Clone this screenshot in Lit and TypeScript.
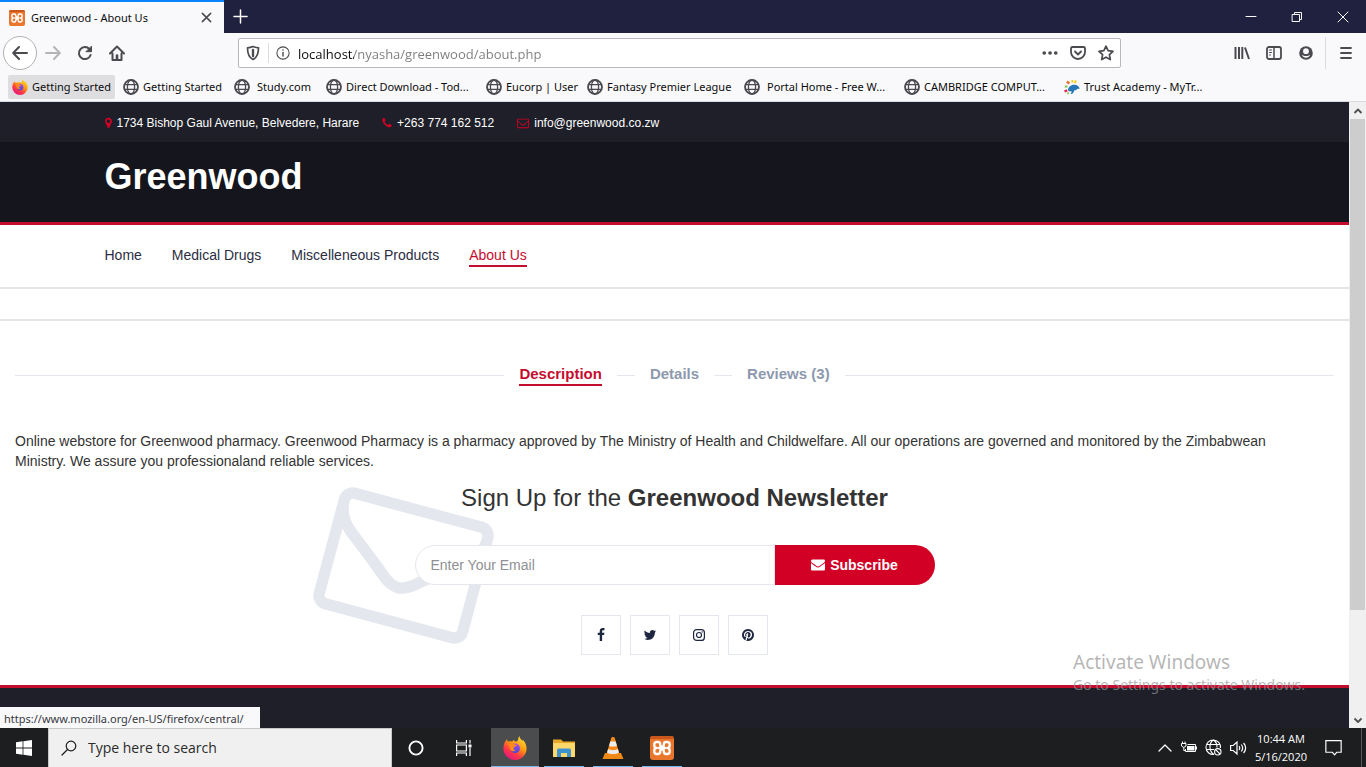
import { LitElement, html, css, svg, nothing } from "lit";
import { customElement, property } from "lit/decorators.js";
import { styleMap } from "lit/directives/style-map.js";

/* ---------- Glyphs on a 1792 grid ---------- */
const glyphs: Record<string, string> = {
  marker:
    "M1152 640q0-106-75-181t-181-75-181 75-75 181 75 181 181 75 181-75 75-181zm256 0q0 109-33 179l-364 774q-16 33-47.5 52t-67.5 19-67.5-19-46.5-52l-365-774q-33-70-33-179 0-212 150-362t362-150 362 150 150 362z",
  phone:
    "M1600 1240q0 27-10 70.5t-21 68.5q-21 50-122 106-94 51-186 51-27 0-53-3.5t-57.5-12.5-47-14.5-55.5-20.5-49-18q-98-35-175-83-127-79-264-216t-216-264q-48-77-83-175-3-9-18-49t-20.5-55.5-14.5-47-12.5-57.5-3.5-53q0-92 51-186 56-101 106-122 25-11 68.5-21t70.5-10q14 0 21 3 18 6 53 76 11 19 30 54t35 63.5 31 53.5q3 4 17.5 25t21.5 35.5 7 28.5q0 20-28.5 50t-62 55-62 53-28.5 46q0 9 5 22.5t8.5 20.5 14 24 11.5 19q76 137 174 235t235 174q2 1 19 11.5t24 14 20.5 8.5 22.5 5q18 0 46-28.5t53-62 55-62 50-28.5q14 0 28.5 7t35.5 21.5 25 17.5q25 15 53.5 31t63.5 35 54 30q70 35 76 53 3 7 3 21z",
  envelopeOpen:
    "M1664 1504v-768q-32 36-69 66-268 206-426 338-51 43-83 67t-86.5 48.5-102.5 24.5h-2q-48 0-102.5-24.5t-86.5-48.5-83-67q-158-132-426-338-37-30-69-66v768q0 13 9.5 22.5t22.5 9.5h1472q13 0 22.5-9.5t9.5-22.5zm0-1051v-24.5l-.5-13-3-12.5-5.5-9-9-7.5-14-2.5h-1472q-13 0-22.5 9.5t-9.5 22.5q0 168 147 284 193 152 401 317 6 5 35 29.5t46 37.5 44.5 31.5 50.5 27.5 43 9h2q20 0 43-9t50.5-27.5 44.5-31.5 46-37.5 35-29.5q208-165 401-317 54-43 100.5-115.5t46.5-131.5zm128-37v1088q0 66-47 113t-113 47h-1472q-66 0-113-47t-47-113v-1088q0-66 47-113t113-47h1472q66 0 113 47t47 113z",
  envelope:
    "M1792 710v794q0 66-47 113t-113 47h-1472q-66 0-113-47t-47-113v-794q44 49 101 87 362 246 497 345 57 42 92.5 65.5t94.5 48 110 24.5h2q51 0 110-24.5t94.5-48 92.5-65.5q170-123 498-345 57-39 100-87zm0-294q0 79-49 151t-122 123q-376 261-468 325-10 7-42.5 31t-54 38.5-52 32.5-57.5 27-50 9h-2q-23 0-50-9t-57.5-27-52-32.5-54-38.5-42.5-31q-91-64-262-182.5t-205-142.5q-62-42-117-115.5t-55-136.5q0-78 41.5-130t118.5-52h1472q65 0 112.5 47t47.5 113z",
  facebook:
    "M1343 12v264h-157q-86 0-116 36t-30 108v189h293l-39 296h-254v759h-306v-759h-255v-296h255v-218q0-186 104-288.5t277-102.5q147 0 228 12z",
  twitter:
    "M1684 408q-67 98-162 167 1 14 1 42 0 130-38 259.5t-115.5 248.5-184.5 210.5-258 146-323 54.5q-271 0-496-145 35 4 78 4 225 0 401-138-105-2-188-64.5t-114-159.5q33 5 61 5 43 0 85-11-112-23-185.5-111.5t-73.5-205.5v-4q68 38 146 41-66-44-105-115t-39-154q0-88 44-163 121 149 294.5 238.5t371.5 99.5q-8-38-8-74 0-134 94.5-228.5t228.5-94.5q140 0 236 102 109-21 205-78-37 115-142 178 93-10 186-50z",
  pinterest:
    "M1664 896q0 209-103 385.5t-279.5 279.5-385.5 103q-111 0-218-32 59-93 78-164 9-34 54-211 20 39 73 67.5t114 28.5q121 0 216-68.5t147-188.5 52-270q0-114-59.5-214t-172.5-163-255-63q-105 0-196 29t-154.5 77-109 110.5-67 129.5-21.5 134q0 104 40 183t117 111q30 12 38-20 2-7 8-31t8-30q6-23-11-43-51-61-51-151 0-151 104.5-259.5t273.5-108.5q151 0 235.5 82t84.5 213q0 170-68.5 289t-175.5 119q-61 0-98-43.5t-23-104.5q8-35 26.5-93.5t30-103 11.5-75.5q0-50-27-83t-77-33q-62 0-105 57t-43 142q0 73 25 122l-99 418q-17 70-13 177-206-91-333-281t-127-423q0-209 103-385.5t279.5-279.5 385.5-103 385.5 103 279.5 279.5 103 385.5z",
};

const glyph = (name: string, size: number, box = "0 0 1792 1792", width = size) =>
  html`<svg width=${width} height=${size} viewBox=${box} fill="currentColor" aria-hidden="true">
    <path d=${glyphs[name]}></path>
  </svg>`;

/* Line icons on a 16 grid */
const line = (body: unknown, size = 16, stroke = 2) =>
  html`<svg width=${size} height=${size} viewBox="0 0 16 16" fill="none" stroke="currentColor"
    stroke-width=${stroke} stroke-linecap="round" stroke-linejoin="round" aria-hidden="true">${body}</svg>`;

const instagram = html`<svg width="14" height="14" viewBox="0 0 14 14" fill="none" stroke="currentColor" aria-hidden="true">
  <rect x="1.6" y="1.6" width="10.8" height="10.8" rx="3" stroke-width="1.2"></rect>
  <circle cx="7" cy="7" r="2.5" stroke-width="1.2"></circle>
  <circle cx="10.2" cy="3.9" r=".7" fill="currentColor" stroke="none"></circle>
</svg>`;

const globe = line(svg`<circle cx="8" cy="8" r="7"/><ellipse cx="8" cy="8" rx="3.6" ry="7" stroke-width="1.3"/><path d="M2 5.6h12M2 10.4h12" stroke-width="1.3"/>`, 16, 1.8);

const xampp = (size: number) => html`<svg width=${size} height=${size} viewBox="0 0 24 24" aria-hidden="true">
  <rect width="24" height="24" rx="3" fill="#e8762d"></rect>
  <path d="M0 3a3 3 0 0 1 3-3h18a3 3 0 0 1 3 3H0z" fill="#c9561b"></path>
  <path d="M10.200 9V8.300A2.300 2.300 0 0 0 7.900 6H6.800A2.500 2.500 0 0 0 4.300 8.500v1C4.300 11 5.200 12 6.800 12 5.200 12 4.300 13 4.300 14.500v1A2.500 2.500 0 0 0 6.800 18h1.100A2.300 2.300 0 0 0 10.200 15.700V15M13.800 9V8.300A2.300 2.300 0 0 1 16.100 6h1.100a2.500 2.500 0 0 1 2.500 2.500v1c0 1.500-.9 2.500-2.500 2.500 1.600 0 2.500 1 2.500 2.500v1a2.500 2.500 0 0 1-2.500 2.500h-1.100a2.300 2.300 0 0 1-2.300-2.300V15M10.200 9c0 1.500.8 1.600 1.800 1.600s1.800-.1 1.800-1.600M10.200 15c0-1.500.8-1.600 1.800-1.600s1.800.1 1.800 1.600M9 12h6"
    fill="none" stroke="#fff" stroke-width="2.300" stroke-linejoin="round" stroke-linecap="round"></path>
</svg>`;

const firefox = (size: number) => html`<svg width=${size} height=${size} viewBox="0 0 24 24" aria-hidden="true">
  <defs>
    <linearGradient id="flame" x1=".85" y1=".05" x2=".25" y2="1">
      <stop offset="0" stop-color="#ffe03a"></stop><stop offset=".4" stop-color="#ff980e"></stop>
      <stop offset=".7" stop-color="#ff3647"></stop><stop offset="1" stop-color="#e31587"></stop>
    </linearGradient>
    <linearGradient id="orb" x1=".6" y1="0" x2=".4" y2="1">
      <stop offset="0" stop-color="#a24bf0"></stop><stop offset="1" stop-color="#4a48cf"></stop>
    </linearGradient>
  </defs>
  <path d="M3.800 3.200c.3 1.200.8 1.800 1.700 2.300 1.200-.3 2.400-.2 3.400.1C9.800 4.500 11.200 3.800 12 3.700c-.6.500-1 1-1 1.600 1.500.2 3 .2 3.700-.5.8-1.600.4-3.300 1.600-4.800.4 2.200 1.700 3.200 3.200 4.900.2-.5.200-1 .1-1.500 2.600 2.600 4 5.800 4 9.200A11.600 11.600 0 0 1 12 24 11.600 11.600 0 0 1 .4 12.400c0-3.600 1.200-6.800 3.400-9.200z" fill="url(#flame)"></path>
  <circle cx="12.200" cy="12.400" r="4.800" fill="url(#orb)"></circle>
  <path d="M5 8.500c2-1.600 4.700-1.600 6.500.1 1.200 0 2 .5 2.500 1-1.200.8-2.800.8-3.300 2.300-.4 1.300.8 2.700 2.300 2.700-2 1.600-5.500.5-6.300-2.200-.4-1.600-.1-2.200 0-2.700z" fill="#ff8a1c"></path>
</svg>`;

const mascot = html`<svg width="16" height="16" viewBox="0 0 16 16" aria-hidden="true">
  <path d="M4 11.500C4 8 7 5.500 10.500 5.700c2.700 0 4.700 1.700 5.200 4.300-1.500-.6-2.500-.5-3 .6-.4 1-1.500.8-2.300.6-.8 2-1.200 3.800-4 3.800 1-.8 1.400-1.700 1-2.700-1.200.2-2.400 0-3.400-.8z" fill="#2577b5"></path>
  <path d="M3 2.500l2.200 2.200" stroke="#f26b2a" stroke-width="2.600"></path>
  <path d="M8.200 1l.3 2.500M12 1.500l-1.300 2.500" stroke="#f8cf1f" stroke-width="2"></path>
  <path d="M.8 7.500l2.700.2" stroke="#7fc241" stroke-width="1.800"></path>
  <path d="M.5 12.500l2.700-1.200" stroke="#e5274f" stroke-width="2.400"></path>
  <path d="M3.600 15l1-1.600" stroke="#7fc241" stroke-width="1.600"></path>
</svg>`;

interface Bookmark { label: string; width: number; icon: unknown; wide?: boolean; active?: boolean }

const bookmarks: Bookmark[] = [
  { label: "Getting Started", width: 79, icon: firefox(16), active: true },
  { label: "Getting Started", width: 79, icon: globe },
  { label: "Study.com", width: 57, icon: globe, wide: true },
  { label: "Direct Download - Tod...", width: 128, icon: globe },
  { label: "Eucorp | User", width: 69, icon: globe },
  { label: "Fantasy Premier League", width: 125, icon: globe },
  { label: "Portal Home - Free W...", width: 125, icon: globe, wide: true },
  { label: "CAMBRIDGE COMPUT...", width: 128, icon: globe },
  { label: "Trust Academy - MyTr...", width: 125, icon: mascot },
];

@customElement("browser-chrome")
class BrowserChrome extends LitElement {
  static styles = css`
    :host { display: block; font: 11px/16px "Noto Sans", "Open Sans", sans-serif; color: #0c0c0d; }
    button { border: 0; padding: 0; background: none; color: inherit; font: inherit; display: grid; place-items: center; }
    svg { display: block; flex: none; }
    .titlebar { display: flex; height: 33px; background: #20213f; color: #f9f9fa; }
    .tab { display: flex; align-items: center; box-sizing: border-box; width: 224px; padding: 0 12px 0 9px; gap: 6px;
      background: #f9f9fb; border-top: 2px solid #0a84ff; color: #0c0c0d; }
    .tab-title { flex: 1; }
    .tab-close { width: 12px; height: 16px; color: #4a4a4f; }
    .new-tab { width: 33px; }
    .window { display: flex; margin-left: auto; }
    .window button { width: 46px; }
    .toolbar { display: flex; align-items: center; height: 40px; background: #f9f9fb; color: #4a4a4f; padding-right: 3px; }
    .nav { display: flex; align-items: center; padding-left: 3px; width: 235px; box-sizing: border-box; }
    .nav button { width: 32px; height: 32px; }
    .nav .back { width: 34px; height: 34px; box-sizing: border-box; border: 1px solid #b1b1b3; border-radius: 50%; background: #fff; }
    .nav .forward { color: #b4b4b8; }
    .address { display: flex; align-items: center; box-sizing: border-box; flex: 1; height: 30px; margin-left: 3px; gap: 8px; padding: 0 6px;
      border: 1px solid #b8b8bc; border-radius: 2px; background: #fff; }
    .site { display: flex; align-items: center; gap: 7px; }
    .site-divider { width: 1px; height: 20px; background: #dcdce0; }
    .url { flex: 1; min-width: 0; border: 0; padding: 2px 0 0; outline: 0; font: 13px/20px "Open Sans", "Noto Sans", sans-serif;
      background: linear-gradient(90deg, #0c0c0d 56px, #7c7c80 56px); background-clip: text; -webkit-background-clip: text;
      color: #7c7c80; -webkit-text-fill-color: transparent; }
    .page-actions { display: flex; align-items: center; gap: 12px; }
    .tools { display: flex; align-items: center; width: 242px; justify-content: flex-end; }
    .tools button { width: 32px; height: 32px; }
    .tools .menu { width: 38px; border-left: 1px solid #dcdce0; margin-left: 3px; padding-left: 3px; }
    .bookmarks { display: flex; align-items: center; height: 28px; padding: 0 8px; gap: 4px; background: #f9f9fb; border-bottom: 1px solid #d9dbe3; }
    .bookmark { display: flex; align-items: center; height: 24px; padding: 0 4px; gap: 4px; color: #0c0c0d; text-decoration: none; white-space: nowrap; border-radius: 2px; }
    .bookmark svg { color: #4a4a4f; }
    .bookmark.wide { gap: 7px; }
    .bookmark.active { background: #dedee1; }
  `;

  render() {
    return html`
      <div class="titlebar">
        <div class="tab">
          ${xampp(16)}<span class="tab-title">Greenwood - About Us</span>
          <button class="tab-close" aria-label="Close tab">${line(svg`<path d="M2 2l12 12M14 2L2 14"/>`, 11, 2.2)}</button>
        </div>
        <button class="new-tab" aria-label="New tab">${line(svg`<path d="M8 1v14M1 8h14"/>`, 15, 1.6)}</button>
        <div class="window">
          <button aria-label="Minimize">${line(svg`<path d="M3 7.500h10"/>`, 16, 1)}</button>
          <button aria-label="Restore">${line(svg`<path d="M3.500 5.500h7v7h-7zM5.500 5.500v-2h7v7h-2"/>`, 16, 1)}</button>
          <button aria-label="Close window">${line(svg`<path d="M3 3l10 10M13 3L3 13"/>`, 16, 1)}</button>
        </div>
      </div>
      <div class="toolbar">
        <div class="nav">
          <button class="back" aria-label="Back">${line(svg`<path d="M15 8H1.500M7 2L1.200 8 7 14"/>`)}</button>
          <button class="forward" aria-label="Forward">${line(svg`<path d="M1 8h13.500M9 2l5.800 6L9 14"/>`)}</button>
          <button aria-label="Reload">${line(svg`<path d="M13.600 10A6 6 0 1 1 12.500 4.200"/><path d="M14.500 1.500v5.200H9.300z" fill="currentColor" stroke-width="1"/>`)}</button>
          <button aria-label="Home">${line(svg`<path d="M1 8.500L8 1.500l7 7M3.500 8.500V15h9V8.500"/><path d="M8 15v-4.500" stroke-width="2.600"/>`)}</button>
        </div>
        <div class="address">
          <div class="site">
            ${line(svg`<path d="M8 1.500c2 .9 3.700 1.200 5.500 1.300 0 5.700-1 9.700-5.500 11.700-4.500-2-5.500-6-5.500-11.700C4.300 2.700 6 2.400 8 1.500z"/><path d="M8 5v6" stroke-width="2.400"/>`, 16, 1.7)}
            <span class="site-divider"></span>
            ${line(svg`<circle cx="8" cy="8" r="7"/><path d="M8 7.500v4" stroke-width="1.600"/><path d="M8 4.600v.1" stroke-width="1.800"/>`, 14, 1.2)}
          </div>
          <input class="url" aria-label="Address" value="localhost/nyasha/greenwood/about.php" />
          <div class="page-actions">
            <button aria-label="Page actions">${line(svg`<path d="M2.200 8h.1M8 8h.1M13.700 8h.1"/>`, 16, 3.6)}</button>
            <button aria-label="Save to Pocket">${line(svg`<path d="M2.500 2h11a1.500 1.500 0 0 1 1.500 1.500V7a7 7 0 0 1-14 0V3.500A1.500 1.500 0 0 1 2.500 2zM5 6.500l3 3 3-3"/>`, 16, 1.8)}</button>
            <button aria-label="Bookmark this page">${line(svg`<path d="M8 1.200l2.100 4.500 4.900.6-3.600 3.400.9 4.900L8 12.200l-4.300 2.400.9-4.900L1 6.300l4.900-.6z"/>`, 16, 1.7)}</button>
          </div>
        </div>
        <div class="tools">
          <button aria-label="Library">${line(svg`<path d="M1.500 2v12M5 2v12M8.300 2v12M11 2.500L15 14" stroke-linecap="butt"/>`)}</button>
          <button aria-label="Sidebars">${line(svg`<rect x="1" y="2" width="14" height="12" rx="2"/><path d="M8 2v12" stroke-width="1.500"/><path d="M3.500 5h2M3.500 7.500h2M3.500 10h1" stroke-width="1"/>`, 16, 1.8)}</button>
          <button aria-label="Account">
            <svg width="16" height="16" viewBox="0 0 16 16" aria-hidden="true">
              <circle cx="8" cy="8" r="6.800" fill="currentColor"></circle>
              <circle cx="8" cy="6.200" r="2.900" fill="#f9f9fb"></circle>
              <path d="M3.800 9.800c1.300 3.800 7.100 3.800 8.400 0-2.200 1.700-6.200 1.700-8.400 0z" fill="#f9f9fb"></path>
            </svg>
          </button>
          <button class="menu" aria-label="Open menu">${line(svg`<path d="M3 3h10M3 8h10M3 13h10"/>`, 16, 1.8)}</button>
        </div>
      </div>
      <nav class="bookmarks" aria-label="Bookmarks">
        ${bookmarks.map(
          (b) => html`<a class="bookmark ${b.active ? "active" : ""} ${b.wide ? "wide" : ""}" href="#">${b.icon}<span style=${styleMap({ width: `${b.width}px` })}>${b.label}</span></a>`
        )}
      </nav>
    `;
  }
}

@customElement("store-page")
class StorePage extends LitElement {
  static styles = css`
    :host { display: block; background: #fff; color: #333; font: 14px/20px "Liberation Sans", Arial, sans-serif; overflow: hidden; }
    a { color: inherit; text-decoration: none; }
    svg { display: block; flex: none; }
    .container { max-width: 1140px; margin: 0 auto; }
    .topbar { background: #1e1f29; color: #fff; font-size: 12px; }
    .contacts { display: flex; align-items: center; gap: 23px; height: 38px; padding-top: 2px; }
    .contact { display: flex; align-items: center; gap: 5px; }
    .contact svg { color: #d10024; }
    .brand { background: #15161d; color: #fff; border-bottom: 3px solid #c40d2e; }
    .brand-row { height: 80px; }
    .brand h1 { margin: 0; padding-top: 15px; font-size: 36px; line-height: 40px; }
    .navigation { border-bottom: 2px solid #e4e5e8; }
    .links { display: flex; gap: 30px; padding: 20px 0; color: #2b2d42; }
    .link { border-bottom: 2px solid transparent; }
    .active { color: #c40d2e; border-bottom: 2px solid #c40d2e; }
    .crumbs { height: 30px; border-bottom: 2px solid #e4e5e8; }
    .product { padding: 43px 15px 0; }
    .tabs { display: flex; align-items: center; font-size: 15px; font-weight: 700; color: #8d99ae; }
    .tabs::before, .tabs::after { content: ""; flex: 1; height: 1px; background: #e4e7ed; }
    .dash { width: 18px; height: 1px; background: #e4e7ed; }
    .tab { margin: 0 15px; border-bottom: 2px solid transparent; }
    .tab.active { border-color: #c40d2e; }
    .about { margin: 45px 30px 0 0; }
    .newsletter { position: relative; width: 520px; max-width: 100%; margin: 0 auto; padding: 10px 0 30px; }
    .mail { position: absolute; left: -90px; top: 9px; color: #e4e7ed; transform: rotate(15deg); }
    .newsletter h2 { position: relative; margin: 0; font-size: 24px; line-height: 34px; font-weight: 400; text-align: center; white-space: nowrap; }
    .signup { position: relative; display: flex; height: 40px; margin-top: 30px; }
    .email { flex: 1; min-width: 0; box-sizing: border-box; border: 1px solid #e4e7ed; border-radius: 40px 0 0 40px; padding: 0 15px; background: #fff; font: inherit; color: #333; }
    .email::placeholder { color: #8f9094; opacity: 1; }
    .subscribe { display: flex; align-items: center; justify-content: center; gap: 5px; width: 160px; border: 0; border-radius: 0 40px 40px 0; background: #d10024; color: #fff; font: inherit; font-weight: 700; }
    .social { display: flex; justify-content: center; gap: 9px; margin-top: 30px; }
    .social a { display: grid; place-items: center; width: 38px; height: 38px; border: 1px solid #e4e7ed; color: #1e2740; background: #fff; }
    .footer { height: 400px; border-top: 3px solid #c40d2e; background: #1e1f29; }
  `;

  render() {
    return html`
      <div class="topbar">
        <div class="container contacts">
          <a class="contact" href="#">${glyph("marker", 12, "384 0 1024 1792", 7)}1734 Bishop Gaul Avenue, Belvedere, Harare</a>
          <a class="contact" href="#">${glyph("phone", 12, "192 0 1408 1792", 10)}+263 774 162 512</a>
          <a class="contact" href="#">${glyph("envelopeOpen", 12)}info@greenwood.co.zw</a>
        </div>
      </div>
      <header class="brand"><div class="container brand-row"><h1>Greenwood</h1></div></header>
      <nav class="navigation">
        <div class="container links">
          <a class="link" href="#">Home</a>
          <a class="link" href="#">Medical Drugs</a>
          <a class="link" href="#">Miscelleneous Products</a>
          <a class="link active" href="#">About Us</a>
        </div>
      </nav>
      <div class="crumbs"></div>
      <section class="product">
        <div class="tabs">
          <a class="tab active" href="#">Description</a><span class="dash"></span>
          <a class="tab" href="#">Details</a><span class="dash"></span>
          <a class="tab" href="#">Reviews (3)</a>
        </div>
        <p class="about">
          Online webstore for Greenwood pharmacy. Greenwood Pharmacy is a pharmacy approved by The Ministry of Health and Childwelfare.
          All our operations are governed and monitored by the Zimbabwean Ministry. We assure you professionaland reliable services.
        </p>
      </section>
      <section class="newsletter">
        <div class="mail">${glyph("envelopeOpen", 160)}</div>
        <h2>Sign Up for the <strong>Greenwood Newsletter</strong></h2>
        <form class="signup" @submit=${(e: Event) => e.preventDefault()}>
          <input class="email" type="email" aria-label="Email" placeholder="Enter Your Email" />
          <button class="subscribe">${glyph("envelope", 14, "0 64 1792 1792")}Subscribe</button>
        </form>
        <div class="social">
          <a href="#" aria-label="Facebook">${glyph("facebook", 14)}</a>
          <a href="#" aria-label="Twitter">${glyph("twitter", 14)}</a>
          <a href="#" aria-label="Instagram">${instagram}</a>
          <a href="#" aria-label="Pinterest">${glyph("pinterest", 14)}</a>
        </div>
      </section>
      <footer class="footer"></footer>
    `;
  }
}

@customElement("desktop-taskbar")
class DesktopTaskbar extends LitElement {
  static styles = css`
    :host { display: flex; height: 39px; background: #1c1e1f; color: #fff; font: 11px/18px "Open Sans", "Noto Sans", sans-serif; }
    button { border: 0; padding: 0; background: none; color: inherit; font: inherit; display: grid; place-items: center; }
    svg { display: block; flex: none; }
    .start { width: 48px; }
    .search { display: flex; align-items: center; gap: 11px; box-sizing: border-box; width: 344px; padding: 0 12px; background: #f0f0f0; color: #1c1c1c; border: 1px solid #c8c8c8; border-bottom: 0; }
    .query { flex: 1; min-width: 0; border: 0; padding: 0; background: none; outline: 0; font: 14px/20px "Open Sans", "Noto Sans", sans-serif; }
    .query::placeholder { color: #2b2b2b; opacity: 1; }
    .plain { width: 48px; }
    .apps { display: flex; gap: 1px; margin-left: 3px; }
    .app { width: 48px; box-sizing: border-box; }
    .app.running { background: linear-gradient(#76b9ed, #76b9ed) bottom / 40px 1px no-repeat; }
    .app.current { background: linear-gradient(#76b9ed, #76b9ed) bottom / 48px 1px no-repeat #4b4c4d; }
    .tray { display: flex; align-items: center; margin-left: auto; gap: 8px; }
    .clock { text-align: center; margin-right: 3px; }
    .notices { width: 30px; height: 39px; margin-right: 5px; }
    .peek { width: 1px; height: 39px; background: #55585a; margin-right: 4px; }
  `;

  render() {
    return html`
      <button class="start" aria-label="Start">
        <svg width="16" height="16" viewBox="0 0 16 16" fill="#fff"><path d="M0 2.200L6.600 1.300v6.300H0zM7.400 1.200L16 0v7.600H7.400zM0 8.400h6.600v6.300L0 13.800zM7.400 8.400H16V16l-8.600-1.200z"></path></svg>
      </button>
      <div class="search">
        ${line(svg`<circle cx="10" cy="6" r="4.800"/><path d="M6.500 9.500L1 15"/>`, 16, 1.2)}
        <input class="query" type="text" aria-label="Search" placeholder="Type here to search" />
      </div>
      <button class="plain" aria-label="Cortana">${line(svg`<circle cx="8" cy="8" r="6.600"/>`, 16, 1.9)}</button>
      <button class="plain" aria-label="Task view">
        <svg width="16" height="16" viewBox="0 0 16 16" fill="none" stroke="#fff" stroke-width="1.200">
          <path d="M.6 0v3h9.800V0M.6 16v-3h9.800v3M.6 5h9.800v6H.6zM14 0v3.500M14 8v8"></path><path d="M12.500 4.500h3v3h-3z" fill="#fff" stroke="none"></path>
        </svg>
      </button>
      <div class="apps">
        <button class="app current" aria-label="Firefox">${firefox(24)}</button>
        <button class="app running" aria-label="File Explorer">
          <svg width="22" height="20" viewBox="0 0 22 20">
            <path d="M0 1.500h8l2 2h12v15H0z" fill="#e9a927"></path><path d="M0 5h22v14H0z" fill="#ffd869"></path>
            <path d="M4 19v-7a1.500 1.500 0 0 1 1.500-1.500h11A1.500 1.500 0 0 1 18 12v7h-4v-4H8v4z" fill="#3c93d0"></path>
          </svg>
        </button>
        <button class="app running" aria-label="VLC">
          <svg width="22" height="24" viewBox="0 0 22 24">
            <path d="M3 17h16l2.500 6H.5z" fill="#ee8a13"></path><path d="M11 1c1 0 1.500.4 1.800 1.200L17.500 18c-2 2.500-11 2.500-13 0L9.200 2.200C9.500 1.400 10 1 11 1z" fill="#f58a1c"></path>
            <path d="M8.300 5.500h5.400l1.200 4.200c-1.500 1.200-6.300 1.200-7.800 0zM6.100 13c2 1.500 7.800 1.500 9.800 0l1 3.500c-2.500 2-9.300 2-11.800 0z" fill="#ececec"></path>
          </svg>
        </button>
        <button class="app running" aria-label="XAMPP">${xampp(24)}</button>
      </div>
      <div class="tray">
        ${line(svg`<path d="M2 11l6-6 6 6"/>`, 16, 1.3)}
        <svg width="16" height="16" viewBox="0 0 16 16" fill="none" stroke="#fff" stroke-width="1">
          <path d="M6.500 4.500h8v7h-10V9M.5 3.500h4.500v2.500L2.800 7.500.5 6zM1.500 1.500v2M4 1.500v2M2.800 7.500v3h1.700"></path><path d="M6 6h7.500v4.500H6zM15 6.500h1v3h-1z" fill="#fff" stroke="none"></path>
        </svg>
        <svg width="17" height="17" viewBox="0 0 17 17" fill="none" stroke="#fff" stroke-width="1.100">
          <path d="M9 15.500A7.300 7.300 0 1 1 15.500 9M9 15.500C3.500 12 4 4 8.200 1c3 1.800 4 5 3.800 7.500M1.500 5.500h13.600M1 10.500h8"></path>
          <circle cx="12.800" cy="12.800" r="3.200"></circle><path d="M10.600 10.600l4.400 4.400"></path>
        </svg>
        <svg width="17" height="16" viewBox="0 0 17 16" fill="none" stroke="#fff" stroke-width="1.200">
          <path d="M.6 5.500h2.600L7 2v12l-3.800-3.500H.6zM9 6c.9 1.200.9 2.800 0 4M11.300 4.500c1.700 2.200 1.700 4.800 0 7M13.600 3c2.600 3.200 2.600 6.800 0 10"></path>
        </svg>
        <div class="clock">10:44 AM<br />5/16/2020</div>
        <button class="notices" aria-label="Notifications">${line(svg`<path d="M.8 1.500h14.400v11H11L9 15l-2-2.500H.8z" stroke-linejoin="miter"/>`, 17, 1.1)}</button>
        <span class="peek"></span>
      </div>
    `;
  }
}

@customElement("app-root")
class AppRoot extends LitElement {
  @property() status = "https://www.mozilla.org/en-US/firefox/central/";

  static styles = css`
    :host { display: flex; flex-direction: column; height: 100vh; overflow: hidden; font-family: "Noto Sans", "Open Sans", sans-serif; }
    .viewport { position: relative; display: flex; flex: 1; min-height: 0; }
    .page { flex: 1; min-width: 0; overflow: hidden; }
    .scrollbar { display: flex; flex-direction: column; width: 17px; background: #f0f0f0; color: #505050; }
    .arrow { display: grid; place-items: center; height: 17px; }
    .track { flex: 1; padding: 0 1px; }
    .thumb { height: 83%; background: #cdcdcd; }
    .status { position: absolute; left: 0; bottom: 0; padding: 3px 16px 0 4px; background: #f9f9fb; color: #38383d; font-size: 11px; line-height: 18px; }
    .watermark { position: absolute; left: 1073px; bottom: 33px; color: rgba(150, 150, 150, .7); font-size: 14px; line-height: 20px; pointer-events: none; }
    .watermark-title { font-size: 19px; line-height: 26px; }
    svg { display: block; }
  `;

  render() {
    return html`
      <browser-chrome></browser-chrome>
      <div class="viewport">
        <div class="page"><store-page></store-page></div>
        <div class="scrollbar">
          <div class="arrow">${line(svg`<path d="M4.500 10L8 6.500l3.500 3.500" stroke-linecap="butt"/>`, 16, 1.8)}</div>
          <div class="track"><div class="thumb"></div></div>
          <div class="arrow">${line(svg`<path d="M4.500 6.500L8 10l3.500-3.500" stroke-linecap="butt"/>`, 16, 1.8)}</div>
        </div>
        ${this.status ? html`<div class="status">${this.status}</div>` : nothing}
        <div class="watermark">
          <div class="watermark-title">Activate Windows</div>
          <div>Go to Settings to activate Windows.</div>
        </div>
      </div>
      <desktop-taskbar></desktop-taskbar>
    `;
  }
}
